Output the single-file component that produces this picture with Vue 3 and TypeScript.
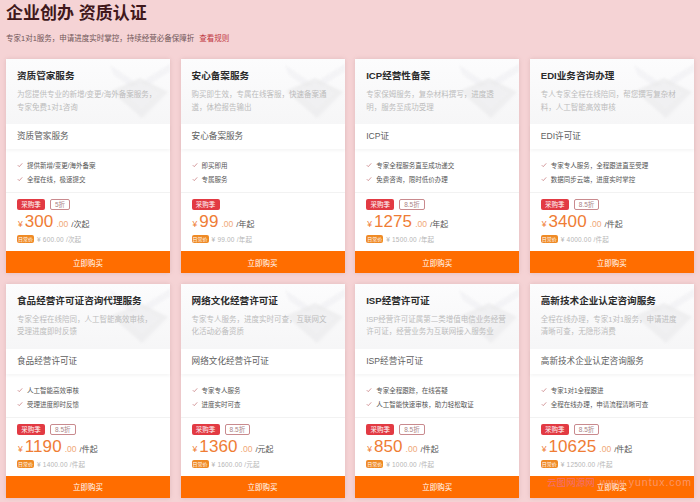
<template>
  <div class="page">
    <h1 class="page__title">企业创办 资质认证</h1>
    <p class="page__sub">专家1对1服务，申请进度实时掌控，持续经营必备保障折<a class="page__rule">查看规则</a></p>

    <div class="grid">
      <section v-for="card in cards" :key="card.title" class="card">
        <header class="card__head">
          <svg class="card__art" viewBox="0 0 62 60" aria-hidden="true">
            <path d="M2 4 30 23 62 3 62 10 30 31 6 14Z" fill="#ececef" opacity="0.45" />
            <path d="M3 30 32 17 60 31 34 57Z" fill="#e9e9eb" opacity="0.65" />
            <path d="M14 31 33 22 51 32 34 47Z" fill="#f0f0f2" />
          </svg>
          <h2 class="card__title">{{ card.title }}</h2>
          <p class="card__desc">{{ card.desc }}</p>
        </header>

        <div class="card__kind">{{ card.kind }}</div>

        <ul class="card__features">
          <li v-for="f in card.features" :key="f">
            <svg class="card__check" viewBox="0 0 8 8" aria-hidden="true">
              <path d="M1 4.2 3 6.2 7 1.8" fill="none" stroke="#b8585c" stroke-width="0.8" />
            </svg>
            {{ f }}
          </li>
        </ul>

        <div class="price">
          <div class="price__tags">
            <span class="tag tag--red">采购季</span>
            <span class="tag tag--line">{{ card.discount }}</span>
          </div>
          <div class="price__now">
            <span class="price__yen">¥</span>
            <span class="price__int">{{ card.price }}</span>
            <span class="price__dec">.00</span>
            <span class="price__unit">{{ card.unit }}</span>
          </div>
          <div class="price__old">
            <span class="tag tag--orange">日常价</span>
            <span>¥ {{ card.old }}.00 {{ card.unit }}</span>
          </div>
        </div>

        <button type="button" class="card__buy">立即购买</button>
      </section>
    </div>

    <div class="mark"><span class="mark__cn">云图网源网</span><span class="mark__en">www.yuntux.com</span></div>
  </div>
</template>

<script setup lang="ts">
const cards = [
  {
    title: '资质管家服务',
    desc: '为您提供专业的新增/变更/海外备案服务，专家免费1对1咨询',
    kind: '资质管家服务',
    features: ['提供新增/变更/海外备案', '全程在线，极速提交'],
    discount: '5折',
    price: '300',
    unit: '/次起',
    old: '600',
  },
  {
    title: '安心备案服务',
    desc: '购买即生效，专属在线客服，快速备案通道，体检报告输出',
    kind: '安心备案服务',
    features: ['即买即用', '专属服务'],
    discount: '',
    price: '99',
    unit: '/年起',
    old: '99',
  },
  {
    title: 'ICP经营性备案',
    desc: '专家保姆服务，复杂材料撰写，进度透明，服务至成功受理',
    kind: 'ICP证',
    features: ['专家全程服务直至成功递交', '免费咨询，限时低价办理'],
    discount: '8.5折',
    price: '1275',
    unit: '/年起',
    old: '1500',
  },
  {
    title: 'EDI业务咨询办理',
    desc: '专人专家全程在线陪同，帮您撰写复杂材料，人工智能高效审核',
    kind: 'EDI许可证',
    features: ['专家专人服务，全程跟进直至受理', '数据同步云端，进度实时掌控'],
    discount: '8.5折',
    price: '3400',
    unit: '/件起',
    old: '4000',
  },
  {
    title: '食品经营许可证咨询代理服务',
    desc: '专家全程在线陪同，人工智能高效审核，受理进度即时反馈',
    kind: '食品经营许可证',
    features: ['人工智能高效审核', '受理进度即时反馈'],
    discount: '8.5折',
    price: '1190',
    unit: '/件起',
    old: '1400',
  },
  {
    title: '网络文化经营许可证',
    desc: '专家专人服务，进度实时可查，互联网文化活动必备资质',
    kind: '网络文化经营许可证',
    features: ['专家专人服务', '进度实时可查'],
    discount: '8.5折',
    price: '1360',
    unit: '/元起',
    old: '1600',
  },
  {
    title: 'ISP经营许可证',
    desc: 'ISP经营许可证属第二类增值电信业务经营许可证，经营业务为互联网接入服务业',
    kind: 'ISP经营许可证',
    features: ['专家全程跟踪，在线答疑', '人工智能快速审核，助力轻松取证'],
    discount: '8.5折',
    price: '850',
    unit: '/件起',
    old: '1000',
  },
  {
    title: '高新技术企业认定咨询服务',
    desc: '全程在线办理，专家1对1服务，申请进度清晰可查，无隐形消费',
    kind: '高新技术企业认定咨询服务',
    features: ['专家1对1全程跟进', '全程在线办理，申请流程清晰可查'],
    discount: '8.5折',
    price: '10625',
    unit: '/件起',
    old: '12500',
  },
];
</script>

<style>
html,
body {
  margin: 0;
  background: #f5d3d5;
}
</style>

<style scoped>
.page {
  position: relative;
  width: 700px;
  height: 502px;
  overflow: hidden;
  padding: 0 6px;
  box-sizing: border-box;
  background: #f5d3d5;
  font-family: "Liberation Sans", "Noto Sans CJK SC", sans-serif;
}

.page__title {
  margin: 0;
  padding-top: 3px;
  height: 24px;
  line-height: 21px;
  font-size: 17px;
  font-weight: 700;
  color: #40181b;
}

.page__sub {
  margin: 6px 0 0;
  height: 12px;
  line-height: 12px;
  font-size: 7.5px;
  color: #6f5557;
}

.page__rule {
  margin-left: 5px;
  color: #c0363f;
}

.grid {
  margin-top: 14px;
  display: grid;
  grid-template-columns: repeat(4, 164px);
  grid-auto-rows: 214px;
  column-gap: 10.6px;
  row-gap: 10.7px;
}

.card {
  display: flex;
  flex-direction: column;
  background: #fff;
  box-shadow: 0 0 4px rgba(190, 140, 140, 0.35);
}

.card__head {
  position: relative;
  height: 65px;
  flex: none;
  box-sizing: border-box;
  padding: 10px 11px 0;
  overflow: hidden;
  background: linear-gradient(180deg, #fcfcfd 0%, #f6f6f7 100%);
}

.card__art {
  position: absolute;
  right: 0;
  top: 2px;
  width: 62px;
  height: 60px;
  filter: blur(0.8px);
}

.card__title {
  position: relative;
  margin: 0;
  height: 14px;
  line-height: 14px;
  font-size: 9.6px;
  font-weight: 700;
  color: #2b2b2b;
}

.card__desc {
  position: relative;
  margin: 6px 0 0;
  line-height: 12.5px;
  font-size: 7.5px;
  color: #bcbcbc;
}

.card__kind {
  flex: none;
  height: 25px;
  line-height: 25px;
  padding-left: 11px;
  font-size: 8.6px;
  color: #606060;
  box-shadow: 0 2px 3px rgba(0, 0, 0, 0.04);
}

.card__features {
  flex: none;
  height: 44px;
  margin: 0;
  padding: 9px 11px 0;
  box-sizing: border-box;
  list-style: none;
  border-bottom: 1px solid #f2f2f2;
  font-size: 6.5px;
  color: #555;
}

.card__features li {
  display: flex;
  align-items: center;
  gap: 4px;
  height: 14px;
  white-space: nowrap;
}

.card__check {
  width: 6px;
  height: 6px;
  flex: none;
}

.price {
  flex: 1;
  padding: 6px 11px 0;
}

.price__tags {
  display: flex;
  gap: 5px;
  height: 11px;
}

.tag {
  display: inline-block;
  box-sizing: border-box;
  text-align: center;
  white-space: nowrap;
}

.tag--red {
  width: 28px;
  height: 11px;
  line-height: 11px;
  border-radius: 2px;
  background: #e23a43;
  color: #fff;
  font-size: 6.5px;
}

.tag--line {
  padding: 0 4px;
  height: 11px;
  line-height: 9.8px;
  border: 0.6px solid #c98a8e;
  border-radius: 2px;
  color: #a98285;
  font-size: 6.5px;
}

.tag--line:empty {
  display: none;
}

.tag--orange {
  width: 17px;
  height: 8px;
  line-height: 8px;
  border-radius: 2px;
  background: #ef8a25;
  color: #fff;
  font-size: 5px;
  letter-spacing: 0;
}

.price__now {
  display: flex;
  align-items: baseline;
  height: 21px;
  line-height: 21px;
  margin-top: 1px;
  padding-left: 1px;
  white-space: nowrap;
}

.price__yen {
  margin-right: 2px;
  font-size: 8.5px;
  color: #ef7d35;
}

.price__int {
  font-size: 17px;
  color: #ef7d35;
  letter-spacing: 0.1px;
}

.price__dec {
  margin: 0 3px 0 3px;
  font-size: 8.5px;
  color: #f0a878;
}

.price__unit {
  font-size: 8px;
  color: #555;
}

.price__old {
  display: flex;
  align-items: center;
  gap: 3px;
  margin-top: 2px;
  height: 10px;
  font-size: 6.5px;
  letter-spacing: 0.2px;
  color: #b5b5b5;
  white-space: nowrap;
}

.card__buy {
  flex: none;
  height: 22px;
  border: none;
  padding: 0;
  background: #ff6d00;
  color: #fff;
  font-family: inherit;
  font-size: 7.5px;
  cursor: pointer;
}

.mark {
  position: absolute;
  left: 547px;
  top: 476px;
  display: flex;
  align-items: baseline;
  gap: 5px;
  white-space: nowrap;
  line-height: 12px;
}

.mark__cn {
  font-size: 9.6px;
  color: rgba(240, 110, 140, 0.85);
}

.mark__en {
  font-size: 10.5px;
  letter-spacing: 0.95px;
  color: rgba(250, 160, 130, 0.8);
}
</style>
